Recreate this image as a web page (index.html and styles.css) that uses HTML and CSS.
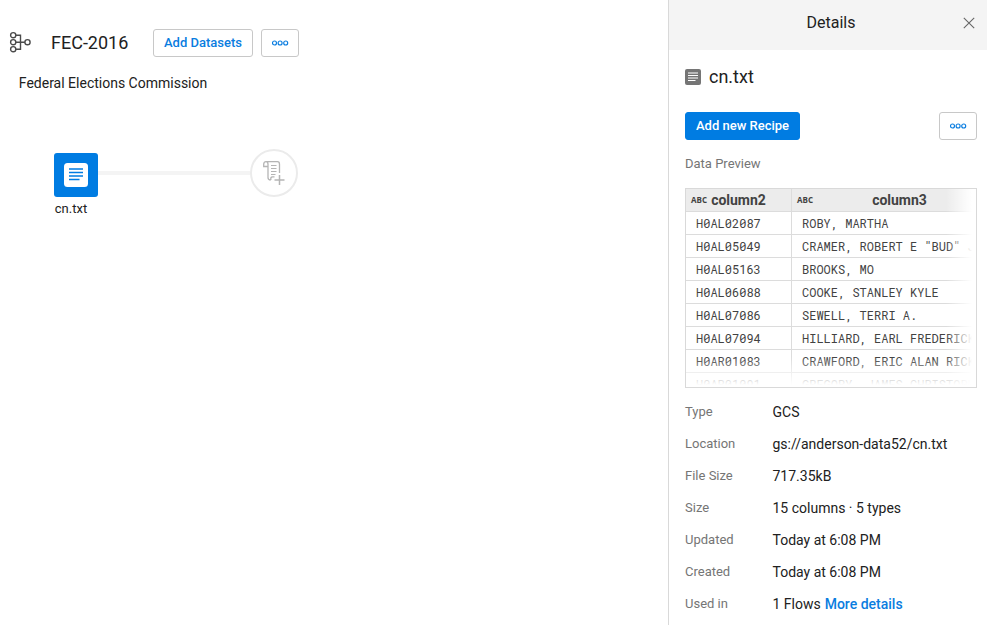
FILE: index.html
```html
<!DOCTYPE html>
<html lang="en">
<head>
<meta charset="utf-8">
<title>FEC-2016</title>
<link rel="stylesheet" href="styles.css">
</head>
<body>
<div class="app">
  <main class="flow">
    <header class="flow-header">
      <svg class="flow-icon" width="24" height="24" viewBox="0 0 24 24" fill="none" stroke="#4a4a4a" stroke-width="1.4">
        <circle cx="5.2" cy="4.2" r="2.6"/><circle cx="5.2" cy="11.2" r="2.6"/><circle cx="5.2" cy="18.2" r="2.6"/><circle cx="19.5" cy="11.2" r="2.6"/>
        <path d="M7.8 4.2H12.5V18.2H7.8M7.8 11.2H16.9"/>
      </svg>
      <h1 class="flow-title">FEC-2016</h1>
      <button class="btn add">Add Datasets</button>
      <button class="btn more" aria-label="More">
        <svg width="17" height="6" viewBox="0 0 17 6" fill="none" stroke="#0a7de0" stroke-width="1.15"><circle cx="2.5" cy="3" r="2"/><circle cx="8.1" cy="3" r="2"/><circle cx="13.7" cy="3" r="2"/></svg>
      </button>
    </header>
    <p class="flow-desc">Federal Elections Commission</p>
    <div class="graph">
      <div class="dataset">
        <svg width="24" height="24" viewBox="0 0 24 24"><rect width="24" height="24" rx="3.5" fill="#fff"/><path d="M5 6H19M5 9.5H19M5 13H19M5 16.5H15.5" stroke="#007ce2" stroke-width="1.6"/></svg>
      </div>
      <div class="edge"></div>
      <div class="recipe">
        <svg width="24" height="28" viewBox="0 0 24 28" fill="none" stroke="#b5b5b5" stroke-width="1.3">
          <path d="M4 2.7H15.5Q17.5 2.7 17.5 5.2V14M4 2.7Q1.7 2.7 1.7 5.2V7.5H6M4 2.7Q6 2.7 6 5.2V18.5Q6 21 8.7 21M9 21Q8.2 17.8 10.5 17.8H12.5"/>
          <path d="M9 6.5H14.5M9 9.5H14.5M9 12.5H14.5M9 15.5H13.5" stroke-width="1"/>
          <path d="M17.5 16V26M12.5 21H22.5" stroke-width="1.5"/>
        </svg>
      </div>
    </div>
    <div class="dataset-name">cn.txt</div>
  </main>

  <aside class="panel">
    <header class="panel-header">
      <span>Details</span>
      <svg class="close" width="12" height="12" viewBox="0 0 12 12" stroke="#666" stroke-width="1.1"><path d="M.8 .8L11.2 11.2M11.2 .8L.8 11.2"/></svg>
    </header>
    <div class="panel-body">
      <div class="file">
        <svg width="16" height="16" viewBox="0 0 16 16"><rect width="16" height="16" rx="2" fill="#757575"/><path d="M3 4H13M3 6.5H13M3 9H13M3 11.5H10.5" stroke="#fff" stroke-width="1.1"/></svg>
        <h2>cn.txt</h2>
      </div>
      <div class="actions">
        <button class="btn primary">Add new Recipe</button>
        <button class="btn more" aria-label="More">
          <svg width="17" height="6" viewBox="0 0 17 6" fill="none" stroke="#0a7de0" stroke-width="1.15"><circle cx="2.5" cy="3" r="2"/><circle cx="8.1" cy="3" r="2"/><circle cx="13.7" cy="3" r="2"/></svg>
        </button>
      </div>
      <div class="label preview-label">Data Preview</div>
      <div class="preview">
        <div class="grid">
          <div class="th"><span class="abc">ABC</span>column2</div><div class="th"><span class="abc">ABC</span>column3</div>
          <div class="td">H0AL02087</div><div class="td">ROBY, MARTHA</div>
          <div class="td">H0AL05049</div><div class="td">CRAMER, ROBERT E "BUD" JR</div>
          <div class="td">H0AL05163</div><div class="td">BROOKS, MO</div>
          <div class="td">H0AL06088</div><div class="td">COOKE, STANLEY KYLE</div>
          <div class="td">H0AL07086</div><div class="td">SEWELL, TERRI A.</div>
          <div class="td">H0AL07094</div><div class="td">HILLIARD, EARL FREDERICK</div>
          <div class="td">H0AR01083</div><div class="td">CRAWFORD, ERIC ALAN RICK</div>
          <div class="td">H0AR01091</div><div class="td">GREGORY, JAMES CHRISTOPHER</div>
        </div>
      </div>
      <dl class="meta">
        <dt>Type</dt><dd>GCS</dd>
        <dt>Location</dt><dd>gs://anderson-data52/cn.txt</dd>
        <dt>File Size</dt><dd>717.35kB</dd>
        <dt>Size</dt><dd>15 columns · 5 types</dd>
        <dt>Updated</dt><dd>Today at 6:08 PM</dd>
        <dt>Created</dt><dd>Today at 6:08 PM</dd>
        <dt>Used in</dt><dd>1 Flows <a>More details</a></dd>
      </dl>
    </div>
  </aside>
</div>
</body>
</html>
```
FILE: styles.css
```css
* { box-sizing: border-box; }
body { margin: 0; font-family: Roboto, "Liberation Sans", sans-serif; color: #212121; background: #fff; font-size: 14px; overflow: hidden; }
h1, h2, p, dl, dd { margin: 0; font-weight: 400; }
svg { display: block; flex: none; }
.app { display: flex; height: 625px; }
.flow { flex: 1; padding-top: 28px; }
.flow-header { display: flex; align-items: center; height: 30px; padding-left: 8px; }
.flow-title { width: 102px; margin-left: 19px; font-size: 18px; line-height: 30px; }
.btn { display: flex; align-items: center; justify-content: center; height: 28px; padding: 0; border: 1px solid #c8c8c8; border-radius: 3px; background: #fff; color: #0a7de0; font: 500 13px/26px Roboto, sans-serif; }
.add { width: 100px; margin-right: 8px; }
.more { width: 38px; }
.flow-desc { margin: 15px 0 0 18.8px; line-height: 20px; }
.graph { display: flex; align-items: center; margin: 56px 0 0 54px; height: 48px; }
.dataset { display: flex; align-items: center; justify-content: center; width: 44px; height: 44px; margin-top: 4px; border-radius: 3px; background: #007ce2; }
.edge { width: 152px; height: 4px; background: #f4f4f4; }
.recipe { display: flex; align-items: center; justify-content: center; width: 48px; height: 48px; border: 2px solid #ebebeb; border-radius: 50%; }
.dataset-name { margin: 3px 0 0 54.8px; font-size: 13px; line-height: 18px; }
.panel { width: 319px; border-left: 1px solid #d9d9d9; }
.panel-header { display: flex; align-items: center; justify-content: flex-end; height: 50px; padding: 0 12px 4px 0; background: #f4f4f4; font-size: 16px; }
.panel-header span { padding-bottom: 2px; }
.close { margin-left: 107.5px; }
.panel-body { padding: 0 10px 0 16px; }
.file { display: flex; align-items: center; height: 54px; gap: 8px; }
.file h2 { padding-bottom: 2px; font-size: 18px; }
.actions { display: flex; justify-content: space-between; margin-top: 8px; }
.primary { width: 115px; border-color: #007ce2; background: #007ce2; color: #fff; }
.label { color: #757575; font-size: 13px; }
.preview-label { margin-top: 14px; line-height: 20px; }
.preview { position: relative; height: 200px; margin-top: 14px; border: 1px solid #d9d9d9; overflow: hidden; }
.preview::after { content: ""; position: absolute; inset: 0; background: linear-gradient(to right, transparent calc(100% - 30px), #fff calc(100% - 4px)), linear-gradient(to bottom, transparent calc(100% - 30px), #fff calc(100% - 2px)); }
.grid { display: grid; grid-template-columns: 106px 216px; grid-auto-rows: 23px; }
.th, .td { border-right: 1px solid #dcdcdc; border-bottom: 1px solid #dcdcdc; white-space: nowrap; color: #424242; line-height: 23px; }
.th { position: relative; background: #ececec; text-align: center; font-weight: 700; line-height: 22px; }
.abc { position: absolute; left: 5px; top: 0; font: 700 8px/22px "Open Sans", sans-serif; }
.td { padding-left: 10px; font-family: "Roboto Mono", "Liberation Mono", monospace; font-size: 12px; }
.meta { display: grid; grid-template-columns: 87.5px 1fr; grid-auto-rows: 32px; margin-top: 8px; line-height: 32px; }
.meta dt { color: #757575; font-size: 13px; }
.meta a { margin-left: .5px; color: #0a7de0; font-weight: 500; }
```
